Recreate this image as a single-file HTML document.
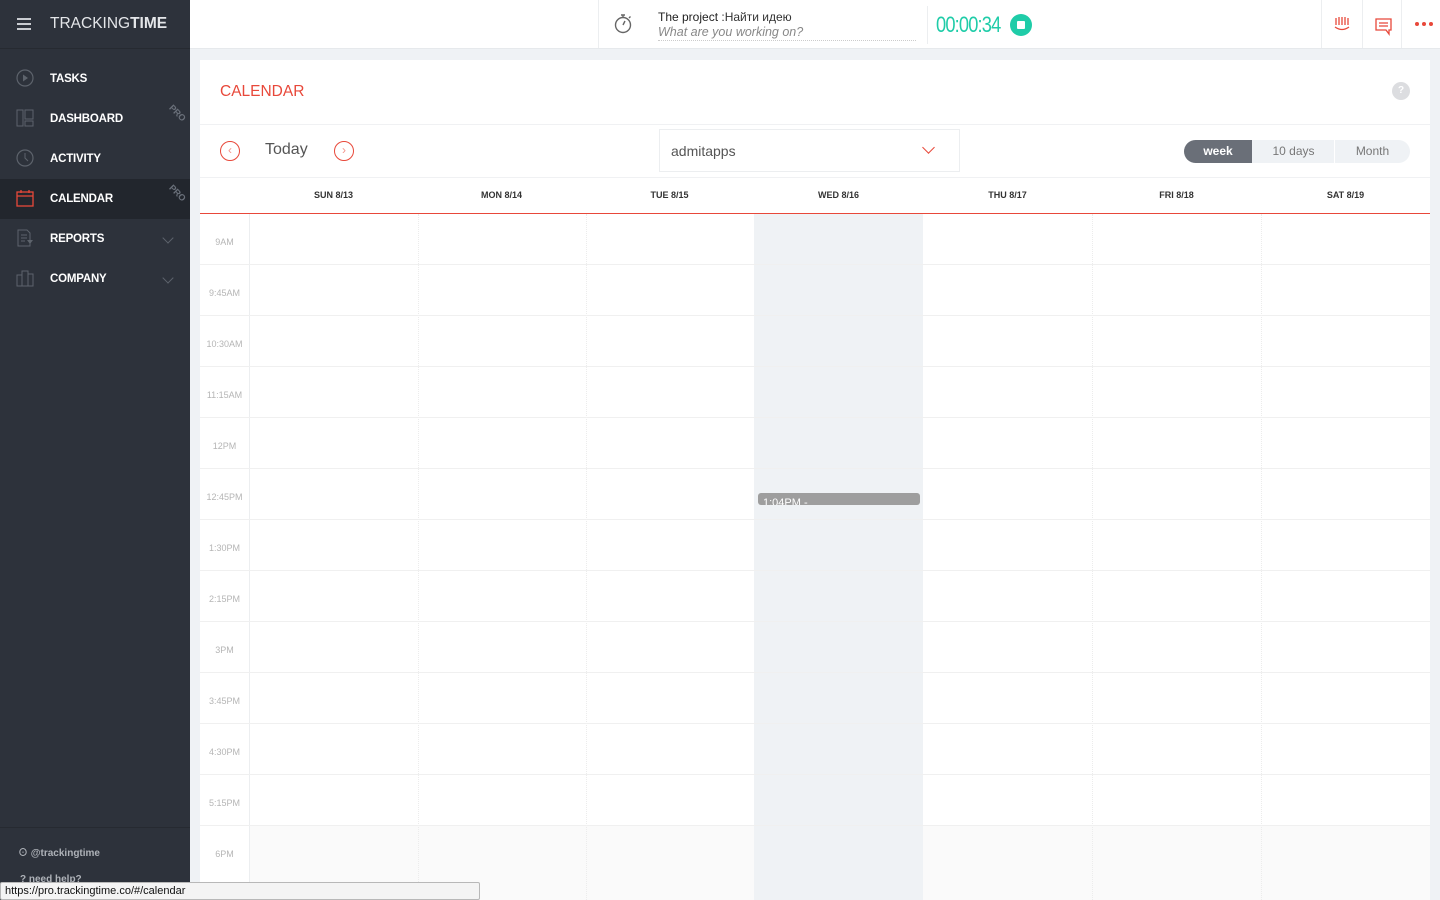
<!DOCTYPE html>
<html><head><meta charset="utf-8"><style>
*{margin:0;padding:0;box-sizing:border-box}
body{width:1440px;height:900px;overflow:hidden;font-family:"Liberation Sans","Noto Sans CJK SC",sans-serif;background:#eff2f5;position:relative}
.abs{position:absolute}
#side{left:0;top:0;width:190px;height:900px;background:#2d323b}
.nav{position:absolute;left:0;width:190px;height:40px;color:#fff;font-size:11.5px;font-weight:bold;line-height:40px;padding-left:50px;letter-spacing:-0.2px}
.nav svg{position:absolute;left:16px;top:10px}
.pro{position:absolute;left:168px;top:0;font-size:9px;color:#6a707a;transform:rotate(45deg);line-height:12px;font-weight:bold}
.chev{position:absolute;left:164px;top:15px;width:8px;height:8px;border-right:1px solid #5d636c;border-bottom:1px solid #5d636c;transform:rotate(45deg)}
#top{left:190px;top:0;width:1250px;height:49px;background:#fff;border-bottom:1px solid #e6e9ec}
#card{left:200px;top:60px;width:1230px;height:840px;background:#fff}
.dh{position:absolute;top:190px;font-size:9px;font-weight:bold;color:#333;width:169px;text-align:center}
.tl{position:absolute;left:200px;width:49px;text-align:center;font-size:9px;color:#b5b5b5}
</style></head><body>
<div id="side" class="abs">
 <div class="abs" style="left:17px;top:18px;width:14px;height:2px;background:#c9ccd1;box-shadow:0 5px 0 #c9ccd1,0 10px 0 #c9ccd1"></div>
 <div class="abs" style="left:50px;top:15px;font-size:15.5px;color:#e4e6e9">TRACKING<b>TIME</b></div>
 <div class="abs" style="left:0;top:48px;width:190px;height:1px;background:#262a31"></div>
 <div class="nav" style="top:59px"><svg width="18" height="18"><circle cx="9" cy="9" r="8" fill="none" stroke="#5d636c" stroke-width="1.2"/><path d="M7 5.5L12 9L7 12.5Z" fill="#5d636c"/></svg>TASKS</div>
 <div class="nav" style="top:99px"><svg width="18" height="18"><rect x="1" y="1" width="6" height="16" fill="none" stroke="#5d636c"/><rect x="9" y="1" width="8" height="9" fill="none" stroke="#5d636c"/><rect x="9" y="12" width="8" height="5" fill="none" stroke="#5d636c"/></svg>DASHBOARD<span class="pro" style="top:8px">PRO</span></div>
 <div class="nav" style="top:139px"><svg width="18" height="18"><circle cx="9" cy="9" r="8" fill="none" stroke="#5d636c" stroke-width="1.2"/><path d="M9 4V9L12 12" fill="none" stroke="#5d636c"/></svg>ACTIVITY</div>
 <div class="nav" style="top:179px;background:#22262d"><svg width="18" height="18"><rect x="1" y="3" width="16" height="14" fill="none" stroke="#e8483a" stroke-width="1.3"/><path d="M1 7H17M5 1V4M13 1V4" stroke="#e8483a" stroke-width="1.3"/></svg>CALENDAR<span class="pro" style="top:8px">PRO</span></div>
 <div class="nav" style="top:219px"><svg width="18" height="18"><path d="M2 1H11L14 4V17H2Z" fill="none" stroke="#5d636c"/><path d="M5 6H11M5 9H11M5 12H9" stroke="#5d636c"/><path d="M11 11H17L14 15Z" fill="#5d636c"/></svg>REPORTS<span class="chev"></span></div>
 <div class="nav" style="top:259px"><svg width="18" height="18"><path d="M1 6H6V17H1ZM6 2H12V17H6ZM12 5H17V17H12Z" fill="none" stroke="#5d636c"/></svg>COMPANY<span class="chev"></span></div>
 <div class="abs" style="left:0;top:827px;width:190px;height:1px;background:#262a31"></div>
 <div class="abs" style="left:18px;top:844px;font-size:10px;color:#aeb2b8;font-weight:bold">⊙ @trackingtime</div>
 <div class="abs" style="left:20px;top:874px;font-size:10px;color:#aeb2b8;font-weight:bold">? need help?</div>
</div>
<div id="top" class="abs">
 <div class="abs" style="left:408px;top:0;width:1px;height:48px;background:#eceef0"></div>
 <svg class="abs" style="left:423px;top:13px" width="20" height="22"><circle cx="10" cy="12" r="7.5" fill="none" stroke="#666" stroke-width="1.4"/><path d="M10 12L12 8M8 2H12M10 2V4.5M16 5L17.5 3.5" stroke="#666" stroke-width="1.4" fill="none"/></svg>
 <div class="abs" style="left:468px;top:10px;font-size:12px;color:#333"><b style="font-weight:normal;color:#222">The project</b> :Найти идею</div>
 <div class="abs" style="left:468px;top:25px;width:258px;font-size:12.5px;font-style:italic;color:#888;border-bottom:1px dotted #ccc;padding-bottom:1px">What are you working on?</div>
 <div class="abs" style="left:737px;top:6px;width:1px;height:38px;background:#eceef0"></div>
 <div class="abs" style="left:746px;top:12px;font-size:22px;color:#1fcca8;letter-spacing:-1px;transform:scaleX(0.83);transform-origin:left">00:00:34</div>
 <div class="abs" style="left:820px;top:14px;width:22px;height:22px;border-radius:50%;background:#1fcca8"><div class="abs" style="left:7px;top:7px;width:8px;height:8px;background:#fff;border-radius:1px"></div></div>
 <div class="abs" style="left:1131px;top:0;width:1px;height:48px;background:#eceef0"></div>
 <div class="abs" style="left:1172px;top:0;width:1px;height:48px;background:#eceef0"></div>
 <div class="abs" style="left:1211px;top:0;width:1px;height:48px;background:#eceef0"></div>
 <svg class="abs" style="left:1144px;top:16px" width="16" height="16"><path d="M2 2V9M5 1V9M8 1V9M11 1V9M14 2V9M1 11Q8 16 15 11" stroke="#e8483a" stroke-width="1.3" fill="none"/></svg>
 <svg class="abs" style="left:1185px;top:18px" width="18" height="18"><path d="M1 1H16V12H14V16L11 12H1Z" fill="none" stroke="#e8483a" stroke-width="1.3"/><path d="M4 5H13M4 8H13" stroke="#e8483a" stroke-width="1.3"/></svg>
 <div class="abs" style="left:1225px;top:22px;width:4px;height:4px;border-radius:50%;background:#e8483a;box-shadow:7px 0 0 #e8483a,14px 0 0 #e8483a"></div>
</div>
<div id="card" class="abs"></div>
<div class="abs" style="left:220px;top:83px;font-size:15.5px;color:#e8483a">CALENDAR</div>
<div class="abs" style="left:1392px;top:82px;width:18px;height:18px;border-radius:50%;background:#dcdde0;color:#fff;font-size:10px;text-align:center;line-height:18px;font-weight:bold">?</div>
<div class="abs" style="left:200px;top:124px;width:1230px;height:1px;background:#f0f1f3"></div>
<div class="abs" style="left:220px;top:141px;width:20px;height:20px;border:1.3px solid #e8483a;border-radius:50%;color:#f3948b;font-size:12px;text-align:center;line-height:17px">‹</div>
<div class="abs" style="left:265px;top:141px;font-size:16px;color:#555">Today</div>
<div class="abs" style="left:334px;top:141px;width:20px;height:20px;border:1.3px solid #e8483a;border-radius:50%;color:#f3948b;font-size:12px;text-align:center;line-height:17px">›</div>
<div class="abs" style="left:659px;top:129px;width:301px;height:43px;border:1px solid #eceef0"></div>
<div class="abs" style="left:671px;top:143px;font-size:14px;color:#555">admitapps</div>
<div class="abs" style="left:924px;top:143px;width:9px;height:9px;border-right:1.5px solid #e8483a;border-bottom:1.5px solid #e8483a;transform:rotate(45deg)"></div>
<div class="abs" style="left:1184px;top:140px;width:226px;height:23px;border-radius:12px;background:#eff2f5;overflow:hidden;font-size:12px;color:#777;line-height:23px">
 <div class="abs" style="left:0;top:0;width:68px;height:23px;background:#6a6f78;color:#fff;font-weight:bold;text-align:center">week</div>
 <div class="abs" style="left:69px;top:0;width:81px;text-align:center">10 days</div>
 <div class="abs" style="left:150px;top:0;width:1px;height:23px;background:#fff"></div>
 <div class="abs" style="left:151px;top:0;width:75px;text-align:center">Month</div>
</div>
<div class="abs" style="left:200px;top:177px;width:1230px;height:1px;background:#f0f1f3"></div>
<div class="dh" style="left:249px">SUN 8/13</div>
<div class="dh" style="left:417px">MON 8/14</div>
<div class="dh" style="left:585px">TUE 8/15</div>
<div class="dh" style="left:754px">WED 8/16</div>
<div class="dh" style="left:923px">THU 8/17</div>
<div class="dh" style="left:1092px">FRI 8/18</div>
<div class="dh" style="left:1261px">SAT 8/19</div>
<div class="abs" style="left:200px;top:213px;width:1230px;height:1px;background:#e8483a"></div>
<div class="abs" style="left:250px;top:826px;width:1180px;height:74px;background:#fafafa"></div>
<div class="abs" style="left:754px;top:214px;width:169px;height:686px;background:#eff2f5"></div>
<div class="abs" style="left:249px;top:214px;width:1px;height:686px;background:#eceef0"></div>
<div class="abs" style="left:418px;top:214px;width:0;height:686px;border-left:1px dotted #ececec"></div>
<div class="abs" style="left:586px;top:214px;width:0;height:686px;border-left:1px dotted #ececec"></div>
<div class="abs" style="left:1092px;top:214px;width:0;height:686px;border-left:1px dotted #ececec"></div>
<div class="abs" style="left:1261px;top:214px;width:0;height:686px;border-left:1px dotted #ececec"></div>
<div class="abs" style="left:200px;top:264px;width:1230px;height:612px;background:repeating-linear-gradient(to bottom,#f0f0f0 0,#f0f0f0 1px,transparent 1px,transparent 51px)"></div>
<div class="tl" style="top:237px">9AM</div>
<div class="tl" style="top:288px">9:45AM</div>
<div class="tl" style="top:339px">10:30AM</div>
<div class="tl" style="top:390px">11:15AM</div>
<div class="tl" style="top:441px">12PM</div>
<div class="tl" style="top:492px">12:45PM</div>
<div class="tl" style="top:543px">1:30PM</div>
<div class="tl" style="top:594px">2:15PM</div>
<div class="tl" style="top:645px">3PM</div>
<div class="tl" style="top:696px">3:45PM</div>
<div class="tl" style="top:747px">4:30PM</div>
<div class="tl" style="top:798px">5:15PM</div>
<div class="tl" style="top:849px">6PM</div>
<div class="abs" style="left:758px;top:493px;width:162px;height:12px;background:#9e9e9e;border-radius:3px;overflow:hidden;color:#fff;font-size:11px;line-height:20px;padding-left:5px">1:04PM -</div>
<div class="abs" style="left:0;top:882px;width:480px;height:18px;background:#f4f4f4;border:1px solid #b8b8b8;border-radius:2px;font-size:11px;color:#111;line-height:16px;padding-left:4px">https://pro.trackingtime.co/#/calendar</div>
</body></html>
